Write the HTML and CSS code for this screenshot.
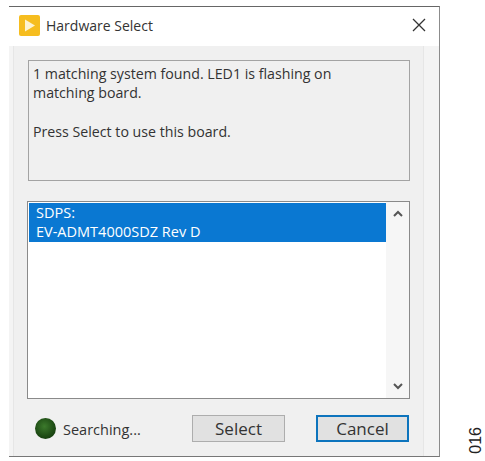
FILE: index.html
```html
<!DOCTYPE html>
<html lang="en">
<head>
  <meta charset="UTF-8">
  <meta name="viewport" content="width=device-width, initial-scale=1.0">
  <title>Hardware Select</title>
  <link rel="stylesheet" href="styles.css">
</head>
<body>
  <div class="dialog">
    <div class="titlebar">
      <svg class="app-icon" width="21" height="21" viewBox="0 0 21 21">
        <rect width="21" height="21" rx="2" fill="#f6bd1f"/>
        <path d="M6 4.5 L16 10.5 L6 16.5 Z" fill="#fdf3d0"/>
      </svg>
      <span class="title">Hardware Select</span>
      <svg class="close" width="14" height="14" viewBox="0 0 14 14">
        <path d="M1 1 L13 13 M13 1 L1 13" stroke="#333" stroke-width="1.3" fill="none"/>
      </svg>
    </div>
    <div class="body">
      <div class="panel">
        <div class="message">
          <p>1 matching system found. LED1 is flashing on matching board.</p>
          <p>Press Select to use this board.</p>
        </div>
        <div class="listbox">
          <div class="items">
            <div class="item selected">SDPS:<br>EV-ADMT4000SDZ Rev D</div>
          </div>
          <div class="scrollbar">
            <svg width="10" height="7" viewBox="0 0 10 7"><path d="M1 6 L5 2 L9 6" stroke="#555" stroke-width="2" fill="none"/></svg>
            <svg width="10" height="7" viewBox="0 0 10 7"><path d="M1 1 L5 5 L9 1" stroke="#555" stroke-width="2" fill="none"/></svg>
          </div>
        </div>
        <div class="footer">
          <span class="led"></span>
          <span class="status">Searching...</span>
          <button class="btn select-btn">Select</button>
          <button class="btn cancel-btn">Cancel</button>
        </div>
      </div>
    </div>
  </div>
  <div class="figure-no">016</div>
</body>
</html>
```

FILE: styles.css
```css
html, body {
  margin: 0;
  height: 100%;
  background: #fff;
  overflow: hidden;
}
body {
  display: flex;
  align-items: flex-start;
  font-family: "Open Sans", "Noto Sans", Arial, sans-serif;
  color: #333;
}
.dialog {
  width: 431px;
  height: 451px;
  margin: 6px 0 0 9px;
  box-sizing: border-box;
  display: flex;
  flex-direction: column;
  border-top: 1px solid #666;
  border-right: 1px solid #8c8c8c;
  border-bottom: 1px solid #777;
  background: #fff;
}
.titlebar {
  height: 39px;
  flex: none;
  box-sizing: border-box;
  display: flex;
  align-items: center;
  padding: 0 13px 3px 10px;
}
.app-icon {
  margin-right: 6px;
}
.title {
  font-size: 14px;
  flex: 1;
}
.body {
  flex: 1;
  display: flex;
  background: #f4f4f4;
  padding-right: 15px;
  padding-left: 4px;
  min-height: 0;
}
.panel {
  flex: 1;
  background: #f0f0f0;
  border-left: 1px solid #e6e6e6;
  border-right: 1px solid #e6e6e6;
  padding: 14px 13px 0 14px;
  display: flex;
  flex-direction: column;
}
.message {
  height: 121px;
  flex: none;
  box-sizing: border-box;
  border: 1px solid #a3a3a3;
  padding: 3px 40px 0 4px;
  font-size: 14.2px;
  line-height: 19px;
}
.message p {
  margin: 0 0 20px;
}
.listbox {
  height: 198px;
  flex: none;
  margin-top: 20px;
  margin-left: -1px;
  box-sizing: border-box;
  border: 1px solid #8a8a8a;
  background: #fff;
  display: flex;
  padding: 1px;
}
.items {
  flex: 1;
}
.item {
  font-size: 14.5px;
  line-height: 19px;
  padding: 0 7px;
  height: 39px;
}
.selected {
  background: #0a78d2;
  color: #fff;
}
.scrollbar {
  width: 23px;
  flex: none;
  background: #f6f6f6;
  display: flex;
  flex-direction: column;
  justify-content: space-between;
  align-items: center;
  padding: 8px 0;
  margin: -1px -1px -1px 0;
}
.footer {
  display: flex;
  align-items: center;
  margin: 16px 1px 0 0;
  height: 27px;
}
.led {
  width: 21px;
  height: 21px;
  flex: none;
  margin-left: 7px;
  border-radius: 50%;
  background: radial-gradient(circle at 45% 40%, #3c7a2c, #1d4a14 60%, #10300c);
}
.status {
  font-size: 14.5px;
  margin: 2px 0 0 7px;
  flex: 1;
}
.btn {
  width: 93px;
  height: 27px;
  box-sizing: border-box;
  font: inherit;
  font-size: 17px;
  line-height: 1;
  color: #333;
  background: #e1e1e1;
  border: 1px solid #adadad;
  padding: 0;
}
.select-btn {
  margin-right: 31px;
}
.cancel-btn {
  border: 2px solid #0d74bd;
}
.figure-no {
  writing-mode: vertical-rl;
  transform: rotate(180deg);
  align-self: flex-end;
  margin: 0 0 7px 27px;
  font-family: "Liberation Sans", Arial, sans-serif;
  font-size: 16px;
  color: #222;
}
```
